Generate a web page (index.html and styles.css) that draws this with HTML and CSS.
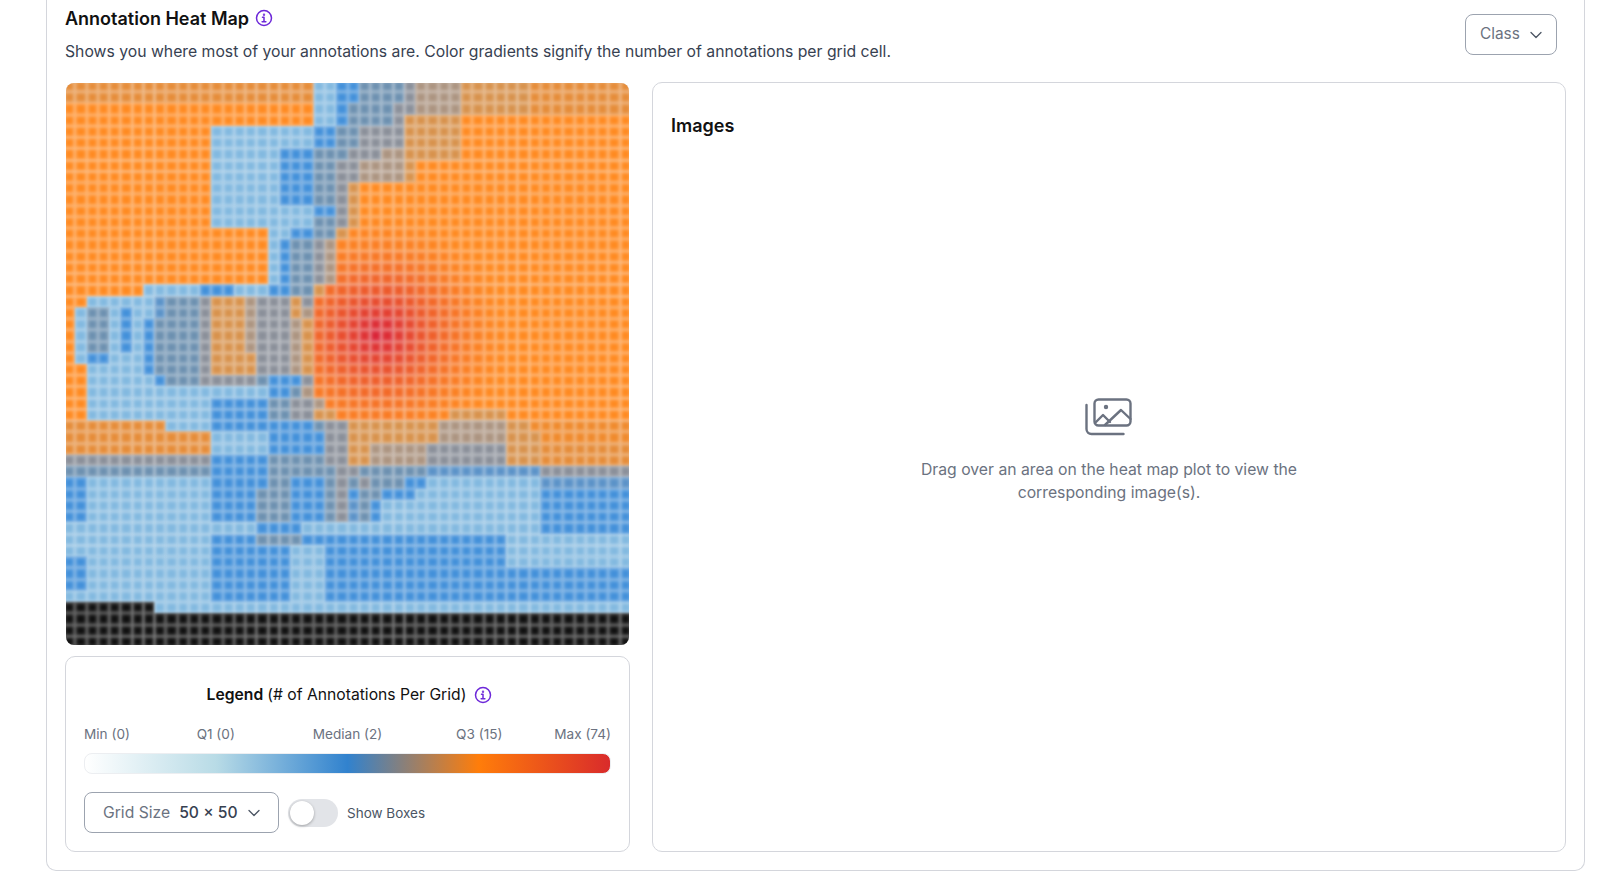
FILE: index.html
```html
<!DOCTYPE html>
<html lang="en">
<head>
<meta charset="utf-8">
<title>Annotation Heat Map</title>
<link rel="stylesheet" href="styles.css">
</head>
<body>
<main class="card">
  <header class="head">
    <div>
      <h1 class="title">Annotation Heat Map
        <svg class="info" viewBox="0 0 24 24" fill="none" stroke="currentColor" stroke-width="2" stroke-linecap="round" stroke-linejoin="round"><circle cx="12" cy="12" r="10"/><path d="M10 11h2v6M9.5 17h5"/><circle cx="12" cy="7.5" r=".6"/></svg>
      </h1>
      <p class="desc">Shows you where most of your annotations are. Color gradients signify the number of annotations per grid cell.</p>
    </div>
    <button class="select select-class"><span class="class-text">Class</span>
      <svg class="chev" viewBox="0 0 14 14" fill="none" stroke="currentColor" stroke-width="1.3" stroke-linecap="round" stroke-linejoin="round"><path d="M2 4.5 7 9.5l5-5"/></svg>
    </button>
  </header>
  <div class="content">
    <section class="left">
      <div class="map"><div id="grid" class="grid"></div></div>
      <div class="legend">
        <h2 class="legend-title"><b>Legend</b> (# of Annotations Per Grid)
          <svg class="info" viewBox="0 0 24 24" fill="none" stroke="currentColor" stroke-width="2" stroke-linecap="round" stroke-linejoin="round"><circle cx="12" cy="12" r="10"/><path d="M10 11h2v6M9.5 17h5"/><circle cx="12" cy="7.5" r=".6"/></svg>
        </h2>
        <div class="scale">
          <span class="s-start">Min (0)</span><span>Q1 (0)</span><span>Median (2)</span><span>Q3 (15)</span><span class="s-end">Max (74)</span>
        </div>
        <div class="bar"></div>
        <div class="controls">
          <button class="select select-grid"><span class="muted">Grid Size</span><span class="val">50 × 50</span>
            <svg class="chev" viewBox="0 0 14 14" fill="none" stroke="currentColor" stroke-width="1.3" stroke-linecap="round" stroke-linejoin="round"><path d="M2 4.5 7 9.5l5-5"/></svg>
          </button>
          <span class="toggle"><span class="knob"></span></span>
          <span class="toggle-label">Show Boxes</span>
        </div>
      </div>
    </section>
    <section class="images">
      <h2 class="images-title">Images</h2>
      <div class="empty">
        <svg class="empty-icon" viewBox="0 0 48 38" fill="none" stroke="currentColor" stroke-width="2.4" stroke-linecap="round" stroke-linejoin="round">
          <rect x="9.5" y="1.5" width="36" height="26" rx="4"/>
          <path d="M1.5 7v24a5 5 0 0 0 5 5h32"/>
          <path d="M10 25l8-8 7 7"/>
          <path d="M20 27l16-15 9.5 9"/>
          <circle cx="21" cy="9" r="1" fill="currentColor"/>
        </svg>
        <p class="empty-text">Drag over an area on the heat map plot to view the<br>corresponding image(s).</p>
      </div>
    </section>
  </div>
</main>
<script src="script.js"></script>
</body>
</html>
```

FILE: styles.css
```css
* { box-sizing: border-box; }
html, body { margin: 0; height: 100%; overflow: hidden; background: #fff; }
body { font-family: Inter, "Liberation Sans", sans-serif; color: #111; padding-left: 46px; padding-right: 20px; }
.card { height: 871px; border: 1px solid #d4d6dc; border-top: none; border-radius: 0 0 10px 10px; padding: 0 18px 18px; display: flex; flex-direction: column; }
.head { display: flex; justify-content: space-between; align-items: flex-start; padding-top: 7px; height: 82px; flex: none; }
.title { margin: 0 0 11px; font-size: 18px; line-height: 24px; font-weight: 600; color: #111; display: flex; align-items: center; gap: 6px; }
.title .info { margin-top: -3px; }
.info { width: 18px; height: 18px; color: #6d28d9; flex: none; }
.desc { margin: 0; font-size: 15.75px; line-height: 20px; color: #374151; }
.select { font: inherit; background: #fff; border: 1px solid #9ca3af; border-radius: 8px; display: flex; align-items: center; height: 41px; padding: 0; color: #6b7280; }
.select-class { width: 92px; margin: 7px 9px 0 0; padding-left: 14px; font-size: 15.4px; gap: 9px; }
.class-text { margin-top: -2px; }
.chev { width: 14px; height: 14px; flex: none; color: #4b5563; }
.content { flex: 1; display: flex; gap: 22px; min-height: 0; }
.left { width: 565px; flex: none; display: flex; flex-direction: column; gap: 11px; }
.map { width: 563px; height: 562px; margin: 1px 0 0 1px; border-radius: 8px; overflow: hidden; background: #ddd; flex: none; }
.grid { display: grid; grid-template-columns: repeat(50, 1fr); grid-template-rows: repeat(50, 1fr); width: 100%; height: 100%; filter: blur(1.1px); transform: scale(1.008); }
.cell { box-shadow: inset 0 0 3px 1.5px rgba(255, 255, 255, .36); }
.legend { flex: 1; border: 1px solid #d4d6dc; border-radius: 10px; padding: 27px 18px 0 18px; }
.legend-title { margin: 0 0 19px; padding-left: 4px; font-size: 15.7px; line-height: 22px; font-weight: 400; display: flex; justify-content: center; align-items: center; gap: 8px; color: #111; white-space: nowrap; }
.legend-title b { font-weight: 600; margin-right: -4px; }
.scale { display: grid; grid-template-columns: 1fr 2fr 2fr 2fr 1fr; font-size: 13.6px; line-height: 18px; color: #6b7280; text-align: center; white-space: nowrap; }
.s-start { text-align: left; }
.s-end { text-align: right; }
.bar { height: 21px; margin-top: 10px; border-radius: 8px; border: 1px solid #eceef1; background: linear-gradient(90deg, #fff 0%, #b8dbe6 25%, #3182ce 50%, #ff7d0a 75%, #d92b2b 100%); }
.controls { display: flex; align-items: center; margin-top: 18px; }
.select-grid { width: 195px; padding-left: 18px; font-size: 15.7px; }
.muted { color: #6b7280; }
.val { color: #374151; margin: 0 9px; font-weight: 500; }
.toggle { width: 50px; height: 28px; border-radius: 14px; background: #e2e4e8; margin-left: 9px; padding: 2px; display: block; }
.knob { display: block; width: 24px; height: 24px; border-radius: 50%; background: #fff; box-shadow: 0 1px 3px rgba(0, 0, 0, .3); }
.toggle-label { font-size: 13.5px; color: #4b5563; margin-left: 9px; }
.images { flex: 1; border: 1px solid #d4d6dc; border-radius: 10px; padding: 30px 18px 18px; display: flex; flex-direction: column; }
.images-title { margin: 0; font-size: 18px; line-height: 26px; font-weight: 600; color: #111; }
.empty { flex: 1; display: flex; flex-direction: column; align-items: center; justify-content: center; padding-bottom: 70px; }
.empty-icon { width: 48px; height: 38px; color: #6b7280; margin-bottom: 22px; }
.empty-text { margin: 0; font-size: 15.75px; line-height: 23px; color: #6b7280; text-align: center; }
```

FILE: script.js
```js
var palette = {
  a: '#82b9e0', b: '#4290da', h: '#5a92c8', c: '#6c90b0', d: '#8a8f99', e: '#ac9480',
  f: '#d8924c', g: '#e68c38', j: '#f08a2c', o: '#ff8a20', k: '#0f0f0f'
};
var r14 = 'o18 a1 b1 c2 d1 e1 o26';
var r21 = 'o1 a1 c2 a1 b1 a1 b1 c4 d1 f3 e1 d3 e1 f1 o28';
var r37 = 'b2 a11 b4 c3 b3 c1 d1 h1 c1 b1 a14 b8';
var rows = [
  'g22 a2 b2 c4 d1 e4 f6 g9',
  'g22 a2 b2 c4 d1 e4 f6 g9',
  'o22 a2 b1 c4 d2 e4 f6 g9',
  'o22 a2 b1 c4 d1 f5 o15',
  'o13 a9 b2 c2 d4 f5 o15',
  'o13 a9 b2 c2 d4 f5 o15',
  'o13 a6 b3 c3 d3 e2 f5 o15',
  'o13 a6 b3 c2 d2 e4 f1 o19',
  'o13 a6 b3 c2 d2 e4 f1 o19',
  'o13 a6 b3 c2 d1 f1 o24',
  'o13 a6 b3 c2 d1 f1 o24',
  'o13 a9 b2 d1 f1 o24',
  'o13 a9 c2 d1 f1 o24',
  'o18 a2 b2 c2 f1 o25',
  r14, r14, r14, r14,
  'o7 a5 b3 a3 b2 c2 f1 o27',
  'o2 a6 h1 c3 d1 f3 e1 d3 f1 d1 o28',
  'o1 a1 c2 a1 b1 a2 h1 c3 d1 f3 e1 d3 f1 e1 o28',
  r21, r21, r21,
  'o1 a1 b2 a3 b1 c4 d1 f4 d3 e1 f1 o28',
  'o2 a5 b1 c4 d1 f4 d3 e1 f1 o28',
  'o2 a6 b1 c3 d5 c1 b3 d1 o28',
  'o2 a16 b2 c1 e1 o28',
  'o2 a11 b5 c2 d2 e1 o27',
  'o2 a11 b5 c2 d2 f2 o10 f5 o11',
  'g9 a4 b9 c1 d2 f8 e6 f2 j9',
  'g13 a5 b5 d2 f8 e6 f3 j8',
  'g13 a5 b5 d2 f2 e5 d7 f3 g8',
  'd13 b5 c5 d2 f2 e5 d7 f3 g8',
  'c13 b5 c6 d2 c6 h10 d8',
  'b2 a11 b5 c2 b3 c1 d1 c1 d1 c3 b2 a10 h8',
  'b2 a11 b4 c3 b3 c1 d1 b1 c2 b3 a11 b8',
  r37, r37,
  'a17 b4 a21 b8',
  'a13 b4 c4 b18 a11',
  'a13 b7 a3 b16 a11',
  'b2 a11 b7 a3 b16 a11',
  'b2 a11 b7 a3 b27',
  'b2 a11 b7 a3 b27',
  'a13 b7 a3 b27',
  'k8 a42',
  'k50', 'k50', 'k50'
];

function channel(hex, i) { return parseInt(hex.substr(1 + i * 2, 2), 16); }

function hot(col, row, base) {
  var dist = Math.sqrt(Math.pow((col - 27.2) / 12, 2) + Math.pow((row - 21.8) / 11, 2));
  var t = Math.pow(Math.max(0, 1 - dist), 1.8);
  if (t === 0) return base;
  var red = '#d81f38';
  var parts = [0, 1, 2].map(function (i) {
    return Math.round(channel(base, i) + (channel(red, i) - channel(base, i)) * t);
  });
  return 'rgb(' + parts.join(',') + ')';
}

var grid = document.getElementById('grid');
rows.forEach(function (spec, r) {
  var col = 0;
  spec.split(' ').forEach(function (run) {
    var key = run.charAt(0), n = parseInt(run.slice(1), 10);
    for (var i = 0; i < n; i++, col++) {
      var cell = document.createElement('div');
      cell.className = 'cell';
      cell.style.background = key === 'o' ? hot(col, r, palette.o) : palette[key];
      grid.appendChild(cell);
    }
  });
});
```
